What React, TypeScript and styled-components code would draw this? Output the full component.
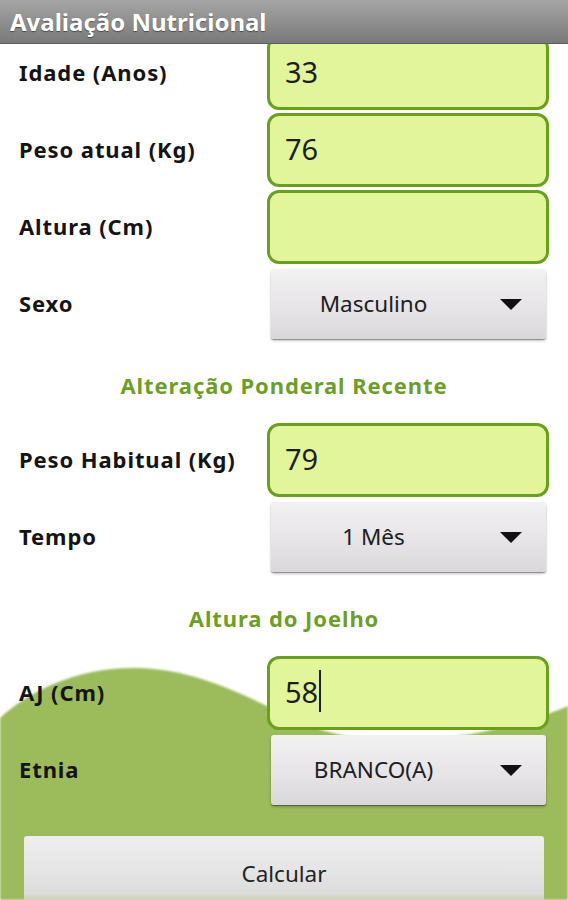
import React from 'react';
import styled, { createGlobalStyle } from 'styled-components';

const GlobalStyle = createGlobalStyle`
  html, body {
    margin: 0;
    padding: 0;
    background: #ffffff;
  }
  body {
    font-family: 'Noto Sans', 'Open Sans', 'DejaVu Sans', sans-serif;
  }
`;

const Page = styled.div`
  position: relative;
  width: 568px;
  height: 900px;
  overflow: hidden;
  background: #ffffff;
`;

const Wave = styled.svg`
  position: absolute;
  left: 0;
  bottom: 0;
  z-index: 0;
`;

const TitleBar = styled.div`
  position: relative;
  z-index: 2;
  height: 44px;
  display: flex;
  align-items: center;
  padding-left: 10px;
  background: linear-gradient(#a6a5a6, #7a797a);
  border-bottom: 1px solid #5f5e5f;
  box-sizing: border-box;
  color: #ffffff;
  font-size: 24px;
  font-weight: 700;
  text-shadow: 0 1px 1px rgba(0, 0, 0, 0.45);
`;

const Content = styled.div`
  position: relative;
  z-index: 1;
  margin-top: -8px;
  display: flex;
  flex-direction: column;
`;

const Row = styled.div<{ $kind: 'input' | 'select' }>`
  display: grid;
  grid-template-columns: 267px 1fr;
  align-items: center;
  padding-right: 19px;
  padding-top: ${(p) => (p.$kind === 'select' ? '2px' : '0')};
  padding-bottom: ${(p) => (p.$kind === 'select' ? '2px' : '3px')};
`;

const Label = styled.div`
  padding-left: 19px;
  padding-bottom: 2px;
  font-size: 22px;
  letter-spacing: 0.9px;
  font-weight: 700;
  color: #141414;
`;

const TextField = styled.div`
  height: 74px;
  box-sizing: border-box;
  display: flex;
  align-items: center;
  padding-left: 15px;
  padding-bottom: 4px;
  border: 3px solid #6aa11c;
  border-radius: 12px;
  background: #e3f59b;
  font-size: 29px;
  color: #1e1e1e;
`;

const Caret = styled.span`
  display: inline-block;
  width: 1.5px;
  height: 42px;
  margin-left: 1px;
  background: #222;
`;

const Spinner = styled.div`
  height: 70px;
  margin: 0 3px 0 4px;
  display: flex;
  align-items: center;
  border-radius: 3px;
  background: linear-gradient(#f3f2f3, #e5e3e5 60%, #d9d8d9);
  box-shadow: 0 1px 1px rgba(0, 0, 0, 0.35), 0 2px 3px rgba(0, 0, 0, 0.2);
`;

const SpinnerText = styled.div`
  flex: 1;
  text-align: center;
  font-size: 22.5px;
  color: #202020;
  padding-bottom: 2px;
`;

const ArrowBox = styled.div`
  width: 70px;
  display: flex;
  justify-content: center;
  align-items: center;
`;

const Heading = styled.div`
  height: 82px;
  box-sizing: border-box;
  padding-top: 31px;
  text-align: center;
  line-height: 26px;
  font-size: 22px;
  letter-spacing: 0.9px;
  font-weight: 700;
  color: #6d9f27;
`;

const CalcButton = styled.div`
  margin: 29px 24px 0 24px;
  height: 76px;
  display: flex;
  justify-content: center;
  padding-top: 22px;
  box-sizing: border-box;
  border-radius: 3px;
  background: linear-gradient(#efeeef, #e6e5e6 45%, #dddcdd 75%, #b9cb8c 95%, #9fbc5e);
  font-size: 22.5px;
  color: #232323;
`;

const Arrow = () => (
  <svg width="22" height="11" viewBox="0 0 22 11">
    <path d="M0 0 L22 0 L11 11 Z" fill="#111" />
  </svg>
);

type Field =
  | { kind: 'input'; label: string; value: string; caret?: boolean }
  | { kind: 'select'; label: string; value: string };

const FieldRow: React.FC<{ field: Field }> = ({ field }) => (
  <Row $kind={field.kind}>
    <Label>{field.label}</Label>
    {field.kind === 'input' ? (
      <TextField>
        {field.value}
        {field.caret && <Caret />}
      </TextField>
    ) : (
      <Spinner>
        <SpinnerText>{field.value}</SpinnerText>
        <ArrowBox>
          <Arrow />
        </ArrowBox>
      </Spinner>
    )}
  </Row>
);

const basics: Field[] = [
  { kind: 'input', label: 'Idade (Anos)', value: '33' },
  { kind: 'input', label: 'Peso atual (Kg)', value: '76' },
  { kind: 'input', label: 'Altura (Cm)', value: '' },
  { kind: 'select', label: 'Sexo', value: 'Masculino' },
];

const ponderal: Field[] = [
  { kind: 'input', label: 'Peso Habitual (Kg)', value: '79' },
  { kind: 'select', label: 'Tempo', value: '1 Mês' },
];

const joelho: Field[] = [
  { kind: 'input', label: 'AJ (Cm)', value: '58', caret: true },
  { kind: 'select', label: 'Etnia', value: 'BRANCO(A)' },
];

export default function App() {
  return (
    <Page>
      <GlobalStyle />
      <Wave width="568" height="240" viewBox="0 660 568 240">
        <defs>
          <filter id="soft" x="-5%" y="-5%" width="110%" height="110%">
            <feGaussianBlur stdDeviation="1.2" />
          </filter>
        </defs>
        <path
          d="M0 718 C30 690 80 666 140 668 C200 670 250 698 300 722 C380 758 500 735 568 706 L568 900 L0 900 Z"
          fill="#9cbb5a"
          filter="url(#soft)"
        />
      </Wave>
      <TitleBar>Avaliação Nutricional</TitleBar>
      <Content>
        {basics.map((f) => (
          <FieldRow key={f.label} field={f} />
        ))}
        <Heading>Alteração Ponderal Recente</Heading>
        {ponderal.map((f) => (
          <FieldRow key={f.label} field={f} />
        ))}
        <Heading>Altura do Joelho</Heading>
        {joelho.map((f) => (
          <FieldRow key={f.label} field={f} />
        ))}
        <CalcButton>Calcular</CalcButton>
      </Content>
    </Page>
  );
}
